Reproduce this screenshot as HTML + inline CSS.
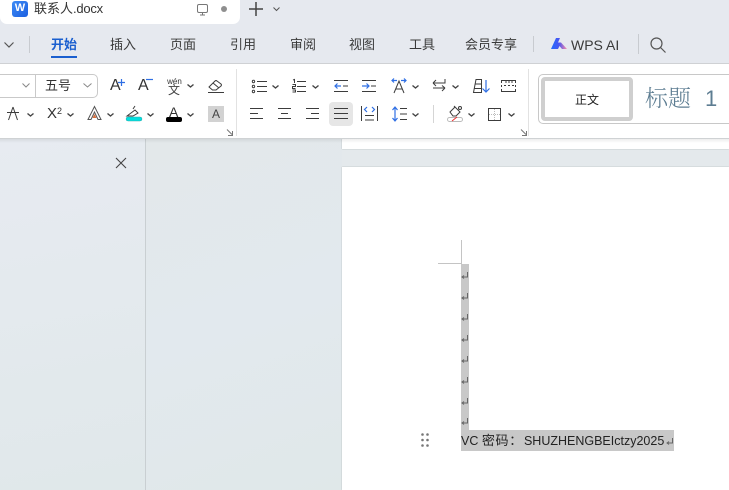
<!DOCTYPE html>
<html lang="zh"><head><meta charset="utf-8"><style>
html,body{margin:0;padding:0}
body{width:729px;height:490px;overflow:hidden;position:relative;background:#e4e9ec;font-family:"Liberation Sans","Noto Sans CJK SC",sans-serif;color:#333}
.a{position:absolute;white-space:nowrap}
.t{position:absolute;top:36px;font-size:13px;line-height:18px;color:#3a3a3a;white-space:nowrap}
svg{position:absolute;overflow:visible}
.s{fill:none;stroke:#3c3c3c;stroke-width:1}
.b{fill:none;stroke:#2f6fe4;stroke-width:1.2}
.c{fill:none;stroke:#444;stroke-width:1.4}
</style></head><body>
<!-- backgrounds -->
<div class="a" style="left:0;top:0;width:729px;height:64px;background:#e6e9ef;border-bottom:1px solid #cfd1d4;box-sizing:border-box"></div>
<div class="a" style="left:0;top:0;width:240px;height:24px;background:#fff;border-radius:0 0 7px 7px"></div>
<div class="a" style="left:0;top:64px;width:729px;height:74px;background:#fff"></div>
<div class="a" style="left:0;top:139px;width:145px;height:351px;background:linear-gradient(170deg,#e7ebf1,#e0e8ea)"></div>
<div class="a" style="left:145px;top:139px;width:1px;height:351px;background:#c9cfd2"></div>
<div class="a" style="left:146px;top:139px;width:196px;height:351px;background:linear-gradient(160deg,#e3e8ea,#e2e9ee 50%,#e0e8e9)"></div>
<div class="a" style="left:342px;top:139px;width:387px;height:10px;background:#fff;box-shadow:0 0 1px rgba(0,0,0,.3)"></div>
<div class="a" style="left:342px;top:167px;width:387px;height:323px;background:#fff;box-shadow:0 0 1px rgba(0,0,0,.3)"></div>
<div class="a" style="left:0;top:138px;width:729px;height:1px;background:#cfd2d4;z-index:1"></div>
<div class="a" style="left:0;top:139px;width:729px;height:4px;background:linear-gradient(rgba(0,0,0,.07),rgba(0,0,0,0));z-index:1"></div>

<!-- tab -->
<div class="a" style="left:12px;top:1px;width:16px;height:16px;background:linear-gradient(135deg,#3d8bf5,#1c5fe0);border-radius:3px;color:#fff;font:bold 11px/15px 'Liberation Sans',sans-serif;text-align:center">W</div>
<div class="a" style="left:34px;top:0;font-size:13px;line-height:18px;color:#333">联系人<span style="letter-spacing:-.25px">.docx</span></div>
<svg style="left:197px;top:4px" width="12" height="12"><rect class="s" style="stroke:#777" x=".5" y=".5" width="10" height="8" rx="1.5"/><path class="s" style="stroke:#777" d="M3 11h5M5.5 9v2"/></svg>
<div class="a" style="left:221px;top:6px;width:6px;height:6px;border-radius:50%;background:#8f8f8f"></div>
<svg style="left:249px;top:2px" width="14" height="14"><path d="M7 0v14M0 7h14" stroke="#444" stroke-width="1.5" fill="none"/></svg>
<svg style="left:273px;top:7px" width="7" height="5"><path class="s" style="stroke:#555" d="M.5.5l3 3 3-3"/></svg>

<!-- menu -->
<svg style="left:4px;top:42px" width="10" height="6"><path class="s" style="stroke:#555;stroke-width:1.2" d="M.5.5l4.500 4.500 4.500-4.500"/></svg>
<div class="a" style="left:29px;top:36px;width:1px;height:17px;background:#c8cbd0"></div>
<div class="t" style="left:51px;color:#1b5fcf;font-weight:bold">开始</div>
<div class="a" style="left:51px;top:56px;width:26px;height:2px;background:#1b5fcf"></div>
<div class="t" style="left:110px">插入</div>
<div class="t" style="left:170px">页面</div>
<div class="t" style="left:230px">引用</div>
<div class="t" style="left:290px">审阅</div>
<div class="t" style="left:349px">视图</div>
<div class="t" style="left:409px">工具</div>
<div class="t" style="left:465px">会员专享</div>
<div class="a" style="left:533px;top:36px;width:1px;height:16px;background:#c8cbd0"></div>
<svg style="left:551px;top:38px" width="16" height="11"><defs><linearGradient id="g" x1="0" x2="1"><stop offset="0" stop-color="#1f6cff"/><stop offset=".5" stop-color="#4a55f0"/><stop offset="1" stop-color="#ff90a8"/></linearGradient></defs><path fill="url(#g)" d="M0 11L5 0h4L7 4.500h3L16 11H11L8.500 8 7 11z"/></svg>
<div class="t" style="left:571px;top:36px;font-size:14px">WPS AI</div>
<div class="a" style="left:638px;top:34px;width:1px;height:20px;background:#c8cbd0"></div>
<svg style="left:650px;top:37px" width="16" height="16"><circle class="s" style="stroke:#555;stroke-width:1.200" cx="6.500" cy="6.500" r="5.500"/><path class="s" style="stroke:#555;stroke-width:1.200" d="M10.500 10.500l5 5"/></svg>

<!-- font row -->
<div class="a" style="left:-10px;top:74px;width:106px;height:22px;border:1px solid #c9c9c9;border-radius:5px"></div>
<div class="a" style="left:35px;top:75px;width:1px;height:22px;background:#c9c9c9"></div>
<svg style="left:22px;top:83px" width="8" height="5"><path class="s" style="stroke:#888" d="M.5.5l3.500 3.500 3.500-3.500"/></svg>
<div class="a" style="left:45px;top:77px;font-size:13px;line-height:17px">五号</div>
<svg style="left:83px;top:83px" width="9" height="5"><path class="s" style="stroke:#888" d="M.5.5l4 3.500 4-3.500"/></svg>
<div class="a" style="left:110px;top:77px;font-size:16px;line-height:18px">A</div>
<svg style="left:118px;top:79px" width="7" height="7"><path class="b" d="M3.500 0v7M0 3.500h7"/></svg>
<div class="a" style="left:138px;top:77px;font-size:16px;line-height:18px">A</div>
<svg style="left:146px;top:79px" width="7" height="2"><path class="b" d="M0 .5h7"/></svg>
<div class="a" style="left:166px;top:77px;width:17px;text-align:center;font-size:8px;line-height:9px;color:#333">wén</div>
<div class="a" style="left:168px;top:84px;font-size:12px;line-height:13px;color:#444">文</div>
<svg style="left:187px;top:84px" width="7" height="4"><path class="c" d="M.5.500l3 2.500 3-2.500"/></svg>
<svg style="left:208px;top:79px" width="16" height="15"><path class="s" d="M1 8l6-6a1.500 1.500 0 0 1 2 0l4 3a1.500 1.500 0 0 1 0 2l-5 4H4.500zM5 4l6 5M0 13.500h16"/></svg>

<!-- font row 2 -->
<svg style="left:7px;top:107px" width="12" height="13"><path class="s" d="M6 0L1.500 13M6 0l4.500 13M0 5.500h12"/></svg>
<svg style="left:27px;top:113px" width="7" height="4"><path class="c" d="M.5.500l3 2.500 3-2.500"/></svg>
<div class="a" style="left:47px;top:105px;font-size:15px;line-height:18px">X<span style="position:relative;top:-4px;font-size:9px">2</span></div>
<svg style="left:67px;top:113px" width="7" height="4"><path class="c" d="M.5.500l3 2.500 3-2.500"/></svg>
<svg style="left:87px;top:106px" width="15" height="14"><path d="M1 13.500L7.500.5 14 13.500h-3L7.500 6 4 13.500z" fill="#fff" stroke="#555"/><path d="M5.500 12l2-4 2 4z" fill="#d8703e"/></svg>
<svg style="left:107px;top:113px" width="7" height="4"><path class="c" d="M.5.500l3 2.500 3-2.500"/></svg>
<svg style="left:126px;top:106px" width="16" height="15"><path class="s" d="M1 10l8-6 3 3-5 3zM7 3l2-3"/><rect x="0" y="11" width="16" height="4" rx="2" fill="#00e0e0" stroke="#38a9a9" stroke-width=".5"/></svg>
<svg style="left:147px;top:113px" width="7" height="4"><path class="c" d="M.5.500l3 2.500 3-2.500"/></svg>
<div class="a" style="left:169px;top:105px;font-size:14px;line-height:14px">A</div>
<div class="a" style="left:166px;top:117px;width:16px;height:5px;background:#000;border-radius:2px"></div>
<svg style="left:187px;top:113px" width="7" height="4"><path class="c" d="M.5.500l3 2.500 3-2.500"/></svg>
<div class="a" style="left:208px;top:106px;width:16px;height:16px;background:#d2d2d2;text-align:center;font-size:12px;line-height:16px;color:#444">A</div>
<svg style="left:226px;top:129px" width="7" height="7"><path class="s" style="stroke:#777" d="M1 .5l5 5M2 6.500h4.500V2"/></svg>
<div class="a" style="left:236px;top:69px;width:1px;height:67px;background:#e2e2e2"></div>

<!-- para row 1 -->
<svg style="left:252px;top:80px" width="15" height="13"><path class="s" d="M5 1.500h10M5 6.500h10M5 11.500h10"/><circle cx="1.500" cy="1.500" r="1.200" class="s"/><circle cx="1.500" cy="6.500" r="1.200" class="s"/><circle cx="1.500" cy="11.500" r="1.200" class="s"/></svg>
<svg style="left:272px;top:85px" width="7" height="4"><path class="c" d="M.5.500l3 2.500 3-2.500"/></svg>
<svg style="left:292px;top:79px" width="14" height="14"><path class="s" d="M5 2.500h9M5 7.500h9M5 12.500h9"/><path class="s" d="M1 1l1.500-.5V4M.5 5.500h3v2h-3v2h3M.5 11h3v2h-3"/></svg>
<svg style="left:312px;top:85px" width="7" height="4"><path class="c" d="M.5.500l3 2.500 3-2.500"/></svg>
<svg style="left:334px;top:80px" width="14" height="12"><path class="s" d="M0 .5h14M0 11.500h14M9 6h5"/><path class="b" d="M7 6H1M3.500 3.500L1 6l2.500 2.500"/></svg>
<svg style="left:362px;top:80px" width="14" height="12"><path class="s" d="M0 .5h14M0 11.500h14M9 6h5"/><path class="b" d="M0 6h7M4.500 3.500L7 6 4.500 8.500"/></svg>
<svg style="left:391px;top:78px" width="16" height="15"><path class="b" d="M1 2.500h5M3 .5L1 2.500l2 2M10 2.500h5M13 .5l2 2-2 2"/><path class="s" d="M3 15L8 3l5 12M5 11h6"/></svg>
<svg style="left:412px;top:85px" width="7" height="4"><path class="c" d="M.5.500l3 2.500 3-2.500"/></svg>
<svg style="left:433px;top:79px" width="13" height="15"><path class="s" d="M12 0v4H0M0 4l3-3M0 4l3 3M0 9h12M12 9l-3-2.500M12 9l-3 3"/></svg>
<svg style="left:452px;top:85px" width="7" height="4"><path class="c" d="M.5.500l3 2.500 3-2.500"/></svg>
<svg style="left:473px;top:79px" width="17" height="14"><path class="s" d="M.5 13.500L3 .5h5.500v13zM2.500 5h6M1.500 9.500h7"/><path class="b" d="M13 1v12M9.500 9.500L13 13l3.500-3.500"/></svg>
<svg style="left:501px;top:80px" width="15" height="12"><path class="s" d="M0 .5h15M0 11.500h15"/><path class="s" stroke-dasharray="2 2" d="M.5 1v10M14.500 1v10M3 5.500h10M5 1v2M8 1v2M11 1v2"/></svg>

<!-- para row 2 -->
<div class="a" style="left:329px;top:102px;width:24px;height:24px;background:#e6e6e6;border-radius:4px"></div>
<svg style="left:250px;top:108px" width="13" height="12"><path class="s" d="M0 .5h13M0 5.500h8M0 10.500h13"/></svg>
<svg style="left:278px;top:108px" width="13" height="12"><path class="s" d="M0 .5h13M3 5.500h7M0 10.500h13"/></svg>
<svg style="left:306px;top:108px" width="13" height="12"><path class="s" d="M0 .5h13M5 5.500h8M0 10.500h13"/></svg>
<svg style="left:334px;top:108px" width="14" height="12"><path class="s" d="M0 .5h14M0 5.500h14M0 10.500h14"/></svg>
<svg style="left:361px;top:106px" width="17" height="16"><path class="s" d="M.5 0v15M16.500 0v15M4 9.500h9M4 14h9"/><path class="b" d="M6 1L3.500 3.500 6 6M11 1l2.500 2.500L11 6"/></svg>
<svg style="left:392px;top:106px" width="15" height="16"><path class="b" d="M3 1v14M.5 4L3 1l2.500 3M.5 12L3 15l2.500-3"/><path class="s" d="M8 2.500h7M8 8h7M8 13.500h7"/></svg>
<svg style="left:412px;top:113px" width="7" height="4"><path class="c" d="M.5.500l3 2.500 3-2.500"/></svg>
<div class="a" style="left:433px;top:105px;width:1px;height:18px;background:#d5d5d5"></div>
<svg style="left:447px;top:105px" width="16" height="17"><path class="s" d="M3 7l5-5 5 5-4 4H6zM8 2l-1-1"/><circle cx="13" cy="3" r="1.500" class="s"/><rect x=".5" y="12.500" width="15" height="4" rx="2" fill="#fff" stroke="#bbb"/><path d="M5 16l5-4" stroke="#e33" stroke-width="1"/></svg>
<svg style="left:468px;top:113px" width="7" height="4"><path class="c" d="M.5.500l3 2.500 3-2.500"/></svg>
<svg style="left:488px;top:108px" width="13" height="13"><rect class="s" x=".5" y=".5" width="12" height="12"/><path d="M6.500 1v11M1 6.500h11" stroke="#bbb" stroke-dasharray="1 1" fill="none"/></svg>
<svg style="left:508px;top:113px" width="7" height="4"><path class="c" d="M.5.500l3 2.500 3-2.500"/></svg>
<svg style="left:520px;top:129px" width="7" height="7"><path class="s" style="stroke:#777" d="M1 .5l5 5M2 6.500h4.500V2"/></svg>
<div class="a" style="left:528px;top:69px;width:1px;height:67px;background:#e2e2e2"></div>

<!-- styles -->
<div class="a" style="left:538px;top:74px;width:210px;height:48px;border:1px solid #c8c8c8;border-radius:5px;box-sizing:content-box"></div>
<div class="a" style="left:541px;top:77px;width:92px;height:44px;box-sizing:border-box;border:4px solid #cfcfcf;border-radius:4px;background:#fff;text-align:center;font-size:12px;line-height:38px;color:#222">正文</div>
<div class="a" style="left:645px;top:83px;font-size:23px;line-height:32px;color:#5d7d92;font-family:'Liberation Serif','Noto Serif CJK SC',serif;font-weight:300">标题<span style="font-size:22px;margin-left:14px;font-family:'Liberation Sans',sans-serif">1</span></div>

<!-- close -->
<svg style="left:116px;top:158px" width="10" height="10"><path d="M0 0l10 10M10 0L0 10" stroke="#444" stroke-width="1.100" fill="none"/></svg>

<!-- document -->
<div class="a" style="left:461px;top:240px;width:1px;height:24px;background:#c4c4c4"></div>
<div class="a" style="left:438px;top:263px;width:24px;height:1px;background:#c4c4c4"></div>
<div class="a" style="left:461px;top:264px;width:8px;height:166px;background:#c8c8c8"></div>
<div class="a" style="left:461px;top:430px;width:213px;height:21px;background:#c8c8c8"></div>
<svg style="left:461px;top:272px" width="8" height="150"><g fill="none" stroke="#666" stroke-width="1"><path d="M6.500 0v5H1M3 3.500L1 5l2 1.500"/><path d="M6.500 21v5H1M3 24.500L1 26l2 1.500"/><path d="M6.500 42v5H1M3 45.500L1 47l2 1.500"/><path d="M6.500 63v5H1M3 66.500L1 68l2 1.500"/><path d="M6.500 84v5H1M3 87.500L1 89l2 1.500"/><path d="M6.500 105v5H1M3 108.500L1 110l2 1.500"/><path d="M6.500 126v5H1M3 129.500L1 131l2 1.500"/><path d="M6.500 146v5H1M3 149.500L1 151l2 1.500"/></g></svg>
<div class="a" style="left:461px;top:432px;font-size:12.500px;line-height:17px;color:#222">VC <span style="font-size:13px;letter-spacing:.7px">密码：</span><span style="margin-left:1px">SHUZHENGBEIctzy2025</span></div>
<svg style="left:666px;top:438px" width="8" height="8"><path fill="none" stroke="#666" d="M6.500 0v5H1M3 3.500L1 5l2 1.500"/></svg>
<svg style="left:421px;top:433px" width="8" height="14" fill="#777"><circle cx="1.500" cy="1.500" r="1.300"/><circle cx="6.500" cy="1.500" r="1.300"/><circle cx="1.500" cy="7" r="1.300"/><circle cx="6.500" cy="7" r="1.300"/><circle cx="1.500" cy="12.500" r="1.300"/><circle cx="6.500" cy="12.500" r="1.300"/></svg>
</body></html>
